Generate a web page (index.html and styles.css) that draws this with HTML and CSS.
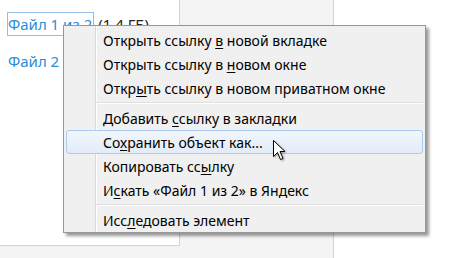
FILE: index.html
```html
<!DOCTYPE html>
<html lang="ru">
<head>
  <meta charset="UTF-8" />
  <title>Загрузки</title>
  <link rel="stylesheet" href="styles.css">
</head>
<body>

<div class="panel">
  <div class="files">
    <div class="file"><span class="name focused">Файл 1 из 2</span> <span class="size">(1.4 ГБ)</span></div>
    <div class="file"><span class="name">Файл 2 из 2</span> <span class="size">(1.4 ГБ)</span></div>
  </div>
</div>

<ul class="menu">
  <li class="item">Открыть ссылку <u>в</u> новой вкладке</li>
  <li class="item">Открыть ссылку в <u>н</u>овом окне</li>
  <li class="item">Откр<u>ы</u>ть ссылку в новом приватном окне</li>
  <li class="sep"></li>
  <li class="item">Добавить <u>с</u>сылку в закладки</li>
  <li class="item hover">Со<u>х</u>ранить объект как...</li>
  <li class="item">Копировать сс<u>ы</u>лку</li>
  <li class="item">И<u>с</u>кать «Файл 1 из 2» в Яндекс</li>
  <li class="sep"></li>
  <li class="item">Исс<u>л</u>едовать элемент</li>
</ul>

<svg class="cursor" width="14" height="22" viewBox="0 0 14 22">
  <path d="M0.5 0.5 L0.5 16.5 L4.5 12.5 L7.5 19.5 L10 18.5 L7 11.5 L12 11.5 Z" fill="#fff" stroke="#000" stroke-width="1" stroke-linejoin="miter"/>
</svg>

</body>
</html>
```

FILE: styles.css
```css
body {
  margin: 0;
  width: 468px;
  height: 258px;
  overflow: hidden;
  background: #fff;
  font-family: "Noto Sans", "Open Sans", sans-serif;
  position: relative;
}

.panel {
  width: 333px;
  height: 258px;
  background: #f4f4f4;
  border-right: 1px solid #d4d4d4;
}

.files {
  width: 170px;
  height: 233px;
  padding: 12px 0 0 8px;
  background: #fff;
  border-right: 1px solid #d4d4d4;
  border-bottom: 1px solid #d4d4d4;
  box-sizing: content-box;
  width: 171px;
}

.file {
  height: 37px;
  font-size: 15px;
  line-height: 20px;
  white-space: nowrap;
}

.name {
  display: inline-block;
  color: #2e8bd5;
  padding: 1px 1px 1px 0;
  margin-left: -1px;
  border: 1px solid transparent;
}

.name.focused {
  border-color: #92bde6;
}

.size {
  color: #222;
}

.menu {
  position: absolute;
  left: 63px;
  top: 25px;
  width: 363px;
  box-sizing: border-box;
  margin: 0;
  padding: 2px 0 0 0;
  list-style: none;
  background: linear-gradient(to right, #f0f0f0 31px, #d9d9d9 31px, #d9d9d9 32px, #fff 32px, #fff 33px, #f0f0f0 33px);
  border: 1px solid #979797;
  box-shadow: 3px 3px 3px rgba(0,0,0,0.4);
  font-size: 14px;
  color: #000;
}

.item {
  height: 24px;
  line-height: 23px;
  padding-left: 36px;
  margin: 0 2px 0 2px;
  border: 1px solid transparent;
  border-radius: 3px;
  box-sizing: border-box;
  white-space: nowrap;
}

.item u {
  text-underline-offset: 2px;
}

.item.hover {
  border-color: #aaccf2;
  background: linear-gradient(to bottom, #f2f6fb, #e2ebf7);
}

.sep {
  height: 6px;
  margin: 0 2px 0 32px;
  background: linear-gradient(to bottom, transparent 2px, #e0e0e0 2px, #e0e0e0 3px, #fff 3px, #fff 4px, transparent 4px);
}

.cursor {
  position: absolute;
  left: 273px;
  top: 140px;
  filter: drop-shadow(1px 1px 1px rgba(0,0,0,0.35));
}
```
